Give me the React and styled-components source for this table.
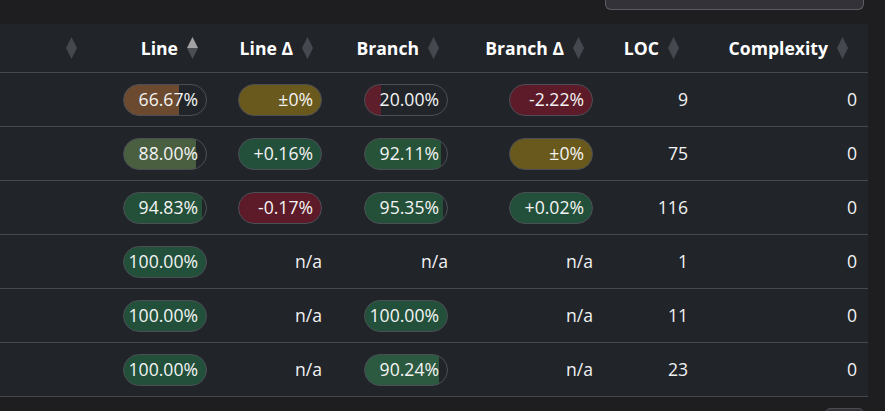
import React from "react";
import styled, { createGlobalStyle } from "styled-components";

const GlobalStyle = createGlobalStyle`
  html, body {
    margin: 0;
    padding: 0;
    background: #1e1e21;
  }
  body {
    font-family: "Open Sans", "Liberation Sans", sans-serif;
    color: #f2f2f2;
  }
`;

const Page = styled.div`
  width: 885px;
  height: 411px;
  overflow: hidden;
  background: #1e1e21;
`;

const TopBar = styled.div`
  height: 24px;
  display: flex;
  justify-content: flex-end;
  align-items: flex-start;
  padding-right: 21px;
  box-sizing: border-box;
`;

const Search = styled.div`
  width: 259px;
  height: 10px;
  box-sizing: border-box;
  background: #323238;
  border: 1px solid #5c5c63;
  border-top: none;
  border-radius: 0 0 6px 6px;
`;

const Table = styled.table`
  width: 868px;
  table-layout: fixed;
  border-collapse: collapse;
  background: #212429;
  font-size: 17.6px;
  line-height: 1.3;
`;

const Th = styled.th`
  height: 48px;
  padding: 0 20px 0 0;
  border-bottom: 1px solid #45484e;
  font-weight: 700;
  color: #ffffff;
  text-align: right;
  white-space: nowrap;
`;

const HeadInner = styled.div`
  display: flex;
  justify-content: flex-end;
  align-items: center;
  gap: 9px;
`;

const Td = styled.td`
  height: 53px;
  padding: 0 11px 0 0;
  border-bottom: 1px solid #45484e;
  text-align: right;
  white-space: nowrap;
`;

const Badge = styled.div`
  display: inline-flex;
  justify-content: flex-end;
  align-items: center;
  width: 84px;
  height: 32px;
  box-sizing: border-box;
  padding-right: 8px;
  border: 1px solid #4b4e55;
  border-radius: 16px;
  overflow: hidden;
  vertical-align: middle;
  color: #f4f4f4;
`;

const Footer = styled.div`
  display: flex;
  justify-content: flex-end;
  padding: 11px 21px 0 0;
`;

const Pager = styled.div`
  width: 37px;
  height: 20px;
  background: #323238;
  border: 1px solid #4a4a50;
  border-radius: 5px;
`;

function SortIcon({ active }) {
  const up = active ? "#a3a3a5" : "#45484e";
  const down = active ? "#4b4e53" : "#45484e";
  return (
    <svg width="11" height="22" viewBox="0 0 11 22">
      <polygon points="5.5,0 11,11 0,11" fill={up} />
      <polygon points="0,11 11,11 5.5,22" fill={down} />
    </svg>
  );
}

const widths = [97, 121, 115, 126, 145, 95, 169];
const headers = ["", "Line", "Line Δ", "Branch", "Branch Δ", "LOC", "Complexity"];

const rows = [
  [
    { v: "66.67%", c: "#6b4a2f", p: 66.67 },
    { v: "±0%", c: "#6a591c", p: 100 },
    { v: "20.00%", c: "#5e1e2c", p: 20 },
    { v: "-2.22%", c: "#5d1a28", p: 100 },
    "9",
    "0",
  ],
  [
    { v: "88.00%", c: "#4a5e40", p: 88 },
    { v: "+0.16%", c: "#23503a", p: 100 },
    { v: "92.11%", c: "#275439", p: 92.11 },
    { v: "±0%", c: "#6a591c", p: 100 },
    "75",
    "0",
  ],
  [
    { v: "94.83%", c: "#24503a", p: 94.83 },
    { v: "-0.17%", c: "#5d1a28", p: 100 },
    { v: "95.35%", c: "#24503a", p: 95.35 },
    { v: "+0.02%", c: "#23503a", p: 100 },
    "116",
    "0",
  ],
  [
    { v: "100.00%", c: "#22503a", p: 100 },
    "n/a",
    "n/a",
    "n/a",
    "1",
    "0",
  ],
  [
    { v: "100.00%", c: "#22503a", p: 100 },
    "n/a",
    { v: "100.00%", c: "#22503a", p: 100 },
    "n/a",
    "11",
    "0",
  ],
  [
    { v: "100.00%", c: "#22503a", p: 100 },
    "n/a",
    { v: "90.24%", c: "#2c5a40", p: 90.24 },
    "n/a",
    "23",
    "0",
  ],
];

function Cell({ value }) {
  if (typeof value === "string") return <Td>{value}</Td>;
  const bg = `linear-gradient(to right, ${value.c} ${value.p}%, transparent ${value.p}%)`;
  return (
    <Td>
      <Badge style={{ background: bg }}>{value.v}</Badge>
    </Td>
  );
}

export default function App() {
  return (
    <Page>
      <GlobalStyle />
      <TopBar>
        <Search />
      </TopBar>
      <Table>
        <colgroup>
          {widths.map((w, i) => (
            <col key={i} style={{ width: w }} />
          ))}
        </colgroup>
        <thead>
          <tr>
            {headers.map((h, i) => (
              <Th key={i}>
                <HeadInner>
                  {h && <span>{h}</span>}
                  <SortIcon active={h === "Line"} />
                </HeadInner>
              </Th>
            ))}
          </tr>
        </thead>
        <tbody>
          {rows.map((r, i) => (
            <tr key={i}>
              <Td />
              {r.map((c, j) => (
                <Cell key={j} value={c} />
              ))}
            </tr>
          ))}
        </tbody>
      </Table>
      <Footer>
        <Pager />
      </Footer>
    </Page>
  );
}
